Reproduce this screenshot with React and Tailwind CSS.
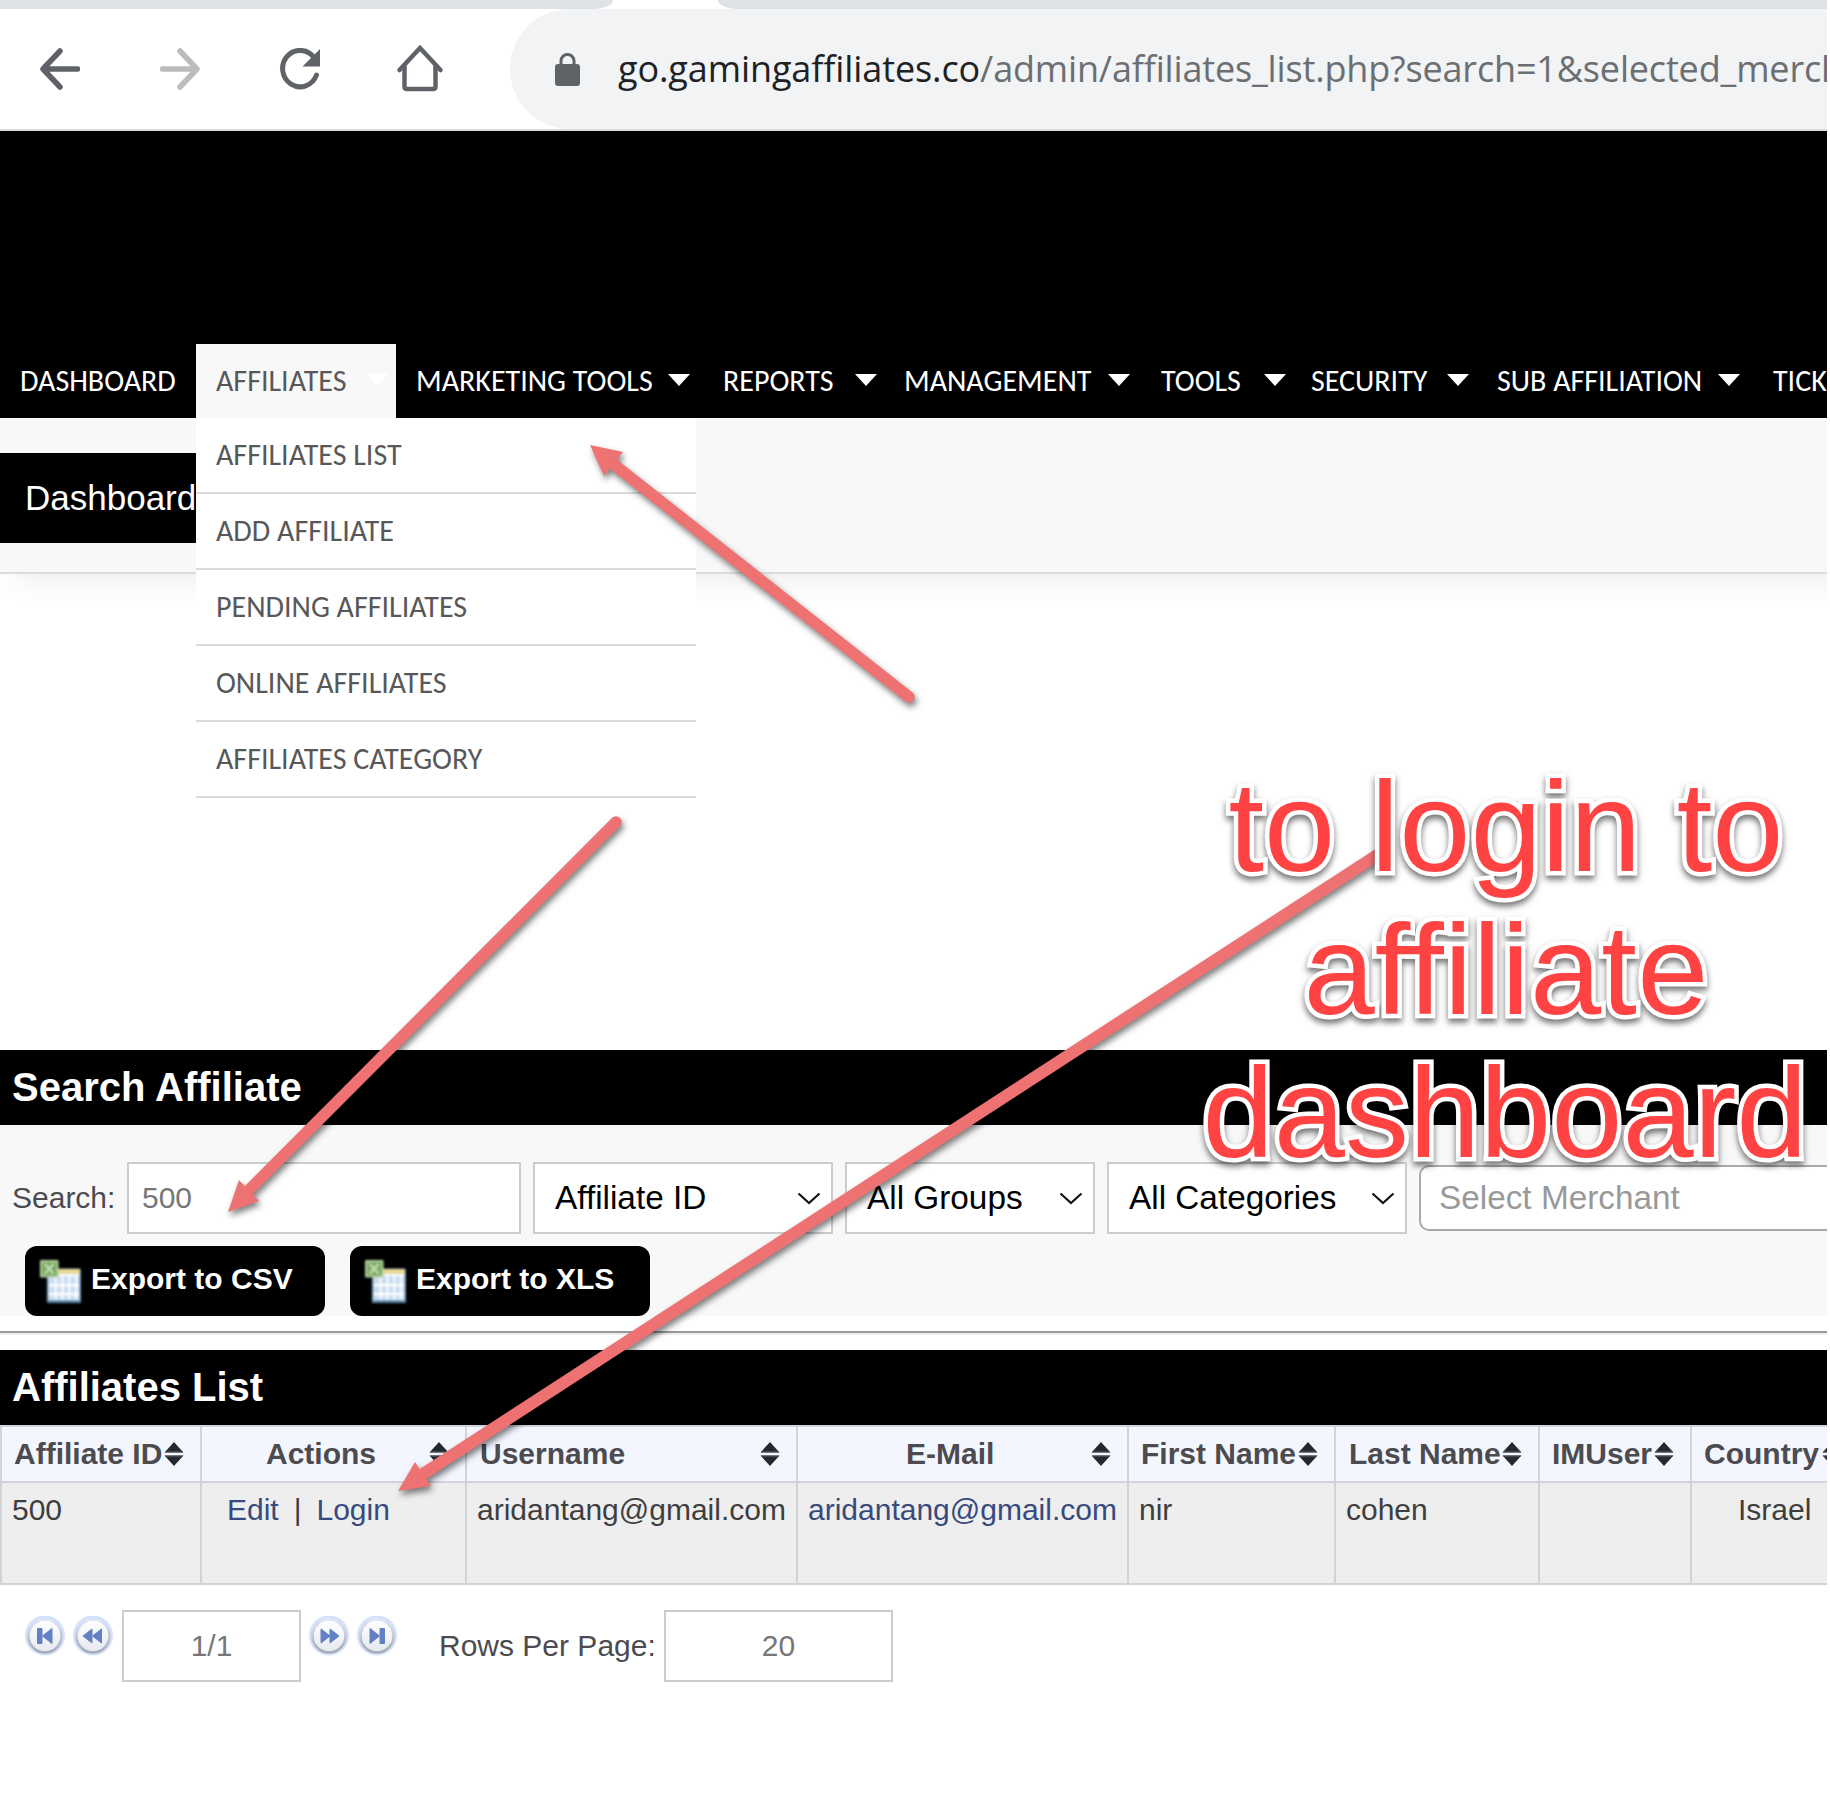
import React from "react";

const NAV = [
  { label: "DASHBOARD", width: 196, arrow: null },
  { label: "AFFILIATES", width: 200, arrow: 8, active: true },
  { label: "MARKETING TOOLS", width: 307, arrow: 13 },
  { label: "REPORTS", width: 181, arrow: 7 },
  { label: "MANAGEMENT", width: 257, arrow: 11 },
  { label: "TOOLS", width: 150, arrow: 5 },
  { label: "SECURITY", width: 186, arrow: 8 },
  { label: "SUB AFFILIATION", width: 276, arrow: 13 },
  { label: "TICKETS", width: 160, arrow: null },
];

const MENU = [
  "AFFILIATES LIST",
  "ADD AFFILIATE",
  "PENDING AFFILIATES",
  "ONLINE AFFILIATES",
  "AFFILIATES CATEGORY",
];

const COLUMNS = [
  { label: "Affiliate ID", pad: 12, cellPad: 10, cell: "500" },
  { label: "Actions", pad: 64, cellPad: 25, cell: "actions" },
  { label: "Username", pad: 13, cellPad: 10, cell: "aridantang@gmail.com" },
  { label: "E-Mail", pad: 108, cellPad: 10, cell: "aridantang@gmail.com", link: true },
  { label: "First Name", pad: 12, cellPad: 10, cell: "nir" },
  { label: "Last Name", pad: 13, cellPad: 10, cell: "cohen" },
  { label: "IMUser", pad: 12, cellPad: 10, cell: "" },
  { label: "Country", pad: 12, cellPad: 46, cell: "Israel" },
];

const GRID = "grid grid-cols-[200px_265px_331px_331px_207px_204px_152px_168px]";

function Toolbar() {
  return (
    <div className="w-full">
      <div className="flex h-[9px] justify-between bg-white">
        <div className="h-[9px] w-[613px] rounded-br-[18px_9px] bg-[#dee1e6]" />
        <div className="h-[9px] w-[1109px] rounded-bl-[18px_9px] bg-[#dee1e6]" />
      </div>
      <div className="flex h-[120px] items-center bg-white">
        <svg className="ml-[40px] h-[42px] w-[40px] shrink-0" viewBox="0 0 40 42" fill="none" stroke="#5f6368" strokeWidth="5.500" strokeLinecap="round" strokeLinejoin="round">
          <path d="M37.500 21H3.500M20 3 3 21l17 18" />
        </svg>
        <svg className="ml-[80px] h-[42px] w-[40px] shrink-0" viewBox="0 0 40 42" fill="none" stroke="#babcbe" strokeWidth="5.500" strokeLinecap="round" strokeLinejoin="round">
          <path d="M2.500 21h34M20 3l17 18-17 18" />
        </svg>
        <svg className="ml-[80px] h-[42px] w-[40px] shrink-0" viewBox="0 0 40 42" fill="none">
          <path d="M34 9.500A17.500 18.200 0 1 0 36.500 27" stroke="#5f6368" strokeWidth="5" strokeLinecap="round" />
          <path d="M40 1v17.500H22.500Z" fill="#5f6368" />
        </svg>
        <svg className="mb-[2px] ml-[76px] h-[48px] w-[48px] shrink-0" viewBox="0 0 48 48" fill="none" stroke="#5f6368" strokeWidth="4.500" strokeLinecap="round" strokeLinejoin="miter">
          <path d="M3.500 26 24 4l20.500 22" />
          <path d="M8.500 22v20.500q0 2.500 2.500 2.500h26q2.500 0 2.500-2.500V22" />
        </svg>
        <div className="ml-[66px] flex h-[120px] w-[1400px] shrink-0 items-center rounded-l-[60px] bg-[#f1f3f4] pb-[1px]">
          <svg className="ml-[45px] mt-[2px] h-[33px] w-[25px] shrink-0" viewBox="0 0 25 33">
            <rect x="0" y="11" width="25" height="22" rx="3" fill="#5f6368" />
            <path d="M6 12V8a6.500 6.500 0 0 1 13 0v4" fill="none" stroke="#5f6368" strokeWidth="3" />
          </svg>
          <span className="ml-[38px] whitespace-nowrap font-['Open_Sans','Noto_Sans',sans-serif] text-[36px] leading-[50px] tracking-[-0.1px] text-[#202124]">
            go.gamingaffiliates.co
            <span className="tracking-[-0.16px] text-[#6b6e72]">/admin/affiliates_list.php?search=1&amp;selected_merch</span>
          </span>
        </div>
      </div>
      <div className="h-[2px] bg-[#dadbdc]" />
    </div>
  );
}

function Navigation() {
  return (
    <div className="flex h-[287px] items-end bg-black font-['Carlito','Lato',sans-serif] text-[30px] leading-[40px]">
      {NAV.map((n) => (
        <div
          key={n.label}
          className={
            "relative flex h-[74px] shrink-0 items-center whitespace-nowrap pl-[20px] " +
            (n.active ? "bg-[#f8f8f8] text-[#58585a]" : "text-white")
          }
          style={{ width: n.width, paddingRight: n.arrow ?? 0 }}
        >
          {n.label}
          {n.arrow !== null && (
            <svg className="mb-[3px] ml-auto h-[12px] w-[22px]" viewBox="0 0 22 12">
              <path d="M0 0h22L11 12Z" fill="#fff" />
            </svg>
          )}
          {n.active && (
            <div className="absolute left-0 top-[74px] z-10 w-[500px] bg-white">
              {MENU.map((m) => (
                <div key={m} className="flex h-[76px] items-center border-b-2 border-[#dadada] pl-[20px] text-[#58585a]">
                  {m}
                </div>
              ))}
            </div>
          )}
        </div>
      ))}
    </div>
  );
}

function SubHeader() {
  return (
    <div className="h-[156px] w-[1920px] border-b-2 border-[#dcdcdc] bg-[#f8f8f8] pt-[35px] shadow-[15px_6px_28px_rgba(0,0,0,0.08)]">
      <div className="flex h-[90px] w-[220px] items-center bg-black pl-[25px] text-[35px] text-white">Dashboard</div>
    </div>
  );
}

function Select({ label, box }) {
  return (
    <div className={"flex h-[72px] shrink-0 items-center justify-between border-2 border-[#ccc] bg-white pl-[20px] pr-[10px] text-[33.33px] text-black " + box}>
      <span className="whitespace-nowrap">{label}</span>
      <svg className="h-[13px] w-[24px]" viewBox="0 0 24 13" fill="none" stroke="#111" strokeWidth="2.200">
        <path d="m1.500 1.500 10.500 9.500 10.500-9.500" />
      </svg>
    </div>
  );
}

function SheetIcon() {
  return (
    <svg className="h-[43px] w-[41px] blur-[0.8px]" viewBox="0 0 42 44">
      <rect x="7" y="9" width="35" height="35" rx="1" fill="#5d87ab" />
      <rect x="8.500" y="9" width="32" height="32" fill="#eef5fc" />
      <rect x="8.500" y="9.500" width="32" height="4.500" fill="#ead58c" />
      <path d="M9 17h31v8H9zM9 27h31v7H9zM9 36h31v4H9z" fill="#b9d2ec" opacity=".75" />
      <path d="M16 15v26M23 15v26M30 15v26M37 15v26M9 25.500h31M9 34.500h31" stroke="#fff" strokeWidth="2" />
      <rect x="0" y="0" width="19" height="18" rx="1.500" fill="#b4d2a2" />
      <rect x="2" y="2" width="15" height="14" fill="#7aa85e" />
      <path d="m5 4 9 10M14 4 5 14" stroke="#c3dbb2" strokeWidth="2.500" />
    </svg>
  );
}

function ExportButton({ children }) {
  return (
    <div className="flex h-[70px] w-[300px] items-center rounded-[12px] bg-black pl-[15px] font-bold text-white">
      <SheetIcon />
      <span className="ml-[10px] whitespace-nowrap pb-[6px]">{children}</span>
    </div>
  );
}

function SearchPanel() {
  return (
    <div>
      <h2 className="flex h-[75px] items-center bg-black pb-[2px] pl-[12px] text-[40px] font-bold text-white">Search Affiliate</h2>
      <div className="h-[191px] overflow-hidden bg-[#f8f8f8] pt-[37px]">
        <div className="flex w-[2000px] items-center">
          <span className="w-[115px] shrink-0 pb-[2px] pl-[12px] text-[#4b4b50]">Search:</span>
          <div className="ml-[12px] flex h-[72px] w-[394px] shrink-0 items-center border-2 border-[#ccc] bg-white pb-[2px] pl-[13px] text-[#777]">500</div>
          <Select label="Affiliate ID" box="ml-[12px] w-[300px]" />
          <Select label="All Groups" box="ml-[12px] w-[250px]" />
          <Select label="All Categories" box="ml-[12px] w-[300px]" />
          <div className="ml-[12px] flex h-[66px] w-[500px] shrink-0 items-center rounded-[10px] border-2 border-[#aaa] bg-white pl-[18px] text-[33.33px] text-[#999]">
            Select Merchant
          </div>
        </div>
        <div className="mt-[12px] flex gap-[25px] pl-[25px]">
          <ExportButton>Export to CSV</ExportButton>
          <ExportButton>Export to XLS</ExportButton>
        </div>
      </div>
    </div>
  );
}

function SortIcon() {
  return (
    <svg className="ml-auto h-[24px] w-[20px] shrink-0" viewBox="0 0 20 24">
      <path d="M10 0 19.500 10.500H.5ZM10 24 .5 13.500h19Z" fill="#23292c" />
      <path d="M1 10h18M1 14h18" stroke="#5d6367" strokeWidth="1" />
    </svg>
  );
}

function AffiliatesTable() {
  return (
    <div>
      <h2 className="flex h-[75px] items-center bg-black pb-[2px] pl-[12px] text-[40px] font-bold text-white">Affiliates List</h2>
      <div className={GRID + " h-[58px] w-[1858px] border-y-2 border-[#d0d4da] bg-[#f3f6ff] font-bold text-[#4b4b50]"}>
        {COLUMNS.map((c) => (
          <div key={c.label} className="flex items-center border-l-2 border-[#d0d4da] pr-[16px]" style={{ paddingLeft: c.pad }}>
            <span className="whitespace-nowrap pb-[2px]">{c.label}</span>
            <SortIcon />
          </div>
        ))}
      </div>
      <div className={GRID + " h-[102px] w-[1858px] border-b-2 border-[#d0d4da] bg-[#eee] leading-[30px] text-[#3e3e40]"}>
        {COLUMNS.map((c) => (
          <div key={c.label} className="whitespace-nowrap border-l-2 border-[#d0d4da] pt-[12px]" style={{ paddingLeft: c.cellPad }}>
            {c.cell === "actions" ? (
              <>
                <span className="text-[#364a7d]">Edit</span>
                <span className="mx-[15px]">|</span>
                <span className="text-[#364a7d]">Login</span>
              </>
            ) : (
              <span className={c.link ? "text-[#364a7d]" : ""}>{c.cell}</span>
            )}
          </div>
        ))}
      </div>
    </div>
  );
}

function PagerIcon({ d }) {
  return (
    <svg className="h-[40px] w-[40px] shrink-0 blur-[0.6px]" viewBox="0 0 40 40">
      <defs>
        <linearGradient id="pagerFace" x1="0" y1="0" x2="0" y2="1">
          <stop offset="0" stopColor="#ffffff" />
          <stop offset=".5" stopColor="#f3f4f8" />
          <stop offset="1" stopColor="#e4e7ef" />
        </linearGradient>
        <linearGradient id="pagerRing" x1="0" y1="0" x2="0" y2="1">
          <stop offset="0" stopColor="#dfe5f3" />
          <stop offset="1" stopColor="#a2a8b5" />
        </linearGradient>
      </defs>
      <circle cx="20" cy="19.500" r="20" fill="#d6e1fb" />
      <circle cx="20" cy="20" r="16.500" fill="url(#pagerFace)" stroke="url(#pagerRing)" strokeWidth="2.500" />
      <path d={d} fill="#6380c4" stroke="#6380c4" strokeWidth="1" strokeLinejoin="round" />
    </svg>
  );
}

function Pager() {
  return (
    <div className="flex items-start pt-[25px]">
      <div className="ml-[25px] mt-[6px] flex gap-[8px]">
        <PagerIcon d="M12.500 12.500h4.500v15h-4.500zM27 12.500v15L17.500 20Z" />
        <PagerIcon d="M19 13v14L10 20ZM28.500 13v14L19.500 20Z" />
      </div>
      <div className="ml-[9px] flex h-[72px] w-[179px] items-center justify-center border-2 border-[#ccc] pb-[2px] text-[#777]">1/1</div>
      <div className="ml-[8px] mt-[6px] flex gap-[8px]">
        <PagerIcon d="M12 13v14l9-7ZM21 13v14l9-7Z" />
        <PagerIcon d="M13 12.500v15L22.500 20ZM23 12.500h4.500v15H23z" />
      </div>
      <span className="ml-[42px] w-[225px] whitespace-nowrap leading-[71px] text-[#4b4b50]">Rows Per Page:</span>
      <div className="flex h-[72px] w-[229px] items-center justify-center border-2 border-[#ccc] pb-[2px] text-[#777]">20</div>
    </div>
  );
}

function Annotations() {
  return (
    <>
      <svg className="pointer-events-none absolute left-0 top-0 z-20 h-[1816px] w-[1830px] drop-shadow-[2px_4px_3px_rgba(0,0,0,0.5)]" viewBox="0 0 1830 1816" fill="#ee7272" stroke="#ee7272">
        <path d="M909 697 612 463" strokeWidth="11.500" strokeLinecap="round" />
        <path d="M590 445 623 452 604 476Z" stroke="none" />
        <path d="M616 822 249 1190" strokeWidth="11.500" strokeLinecap="round" />
        <path d="M228 1212 239 1180 259 1201Z" stroke="none" />
        <path d="M1385 850 423 1474" strokeWidth="12" />
        <path d="M398 1491 415 1462 431 1486Z" stroke="none" />
      </svg>
      <div className="pointer-events-none absolute left-[1156px] top-[755px] z-30 w-[700px] text-center text-[128px] leading-[143px] text-[#ff4343] [-webkit-text-stroke:9px_white] [font-variant-ligatures:none] [paint-order:stroke_fill] [stroke-linejoin:round] drop-shadow-[0px_4px_3px_rgba(0,0,0,0.55)]">
        <div>to login to</div>
        <div className="tracking-[0.2px]">affiliate</div>
        <div className="mr-[2px]">dashboard</div>
      </div>
    </>
  );
}

export default function App() {
  return (
    <div className="relative h-[1816px] w-[1827px] overflow-hidden bg-white font-['Liberation_Sans',Arial,sans-serif] text-[30px]">
      <Toolbar />
      <Navigation />
      <SubHeader />
      <div className="h-[476px]" />
      <SearchPanel />
      <div className="mb-[15px] mt-[15px] h-[4px] border-b-2 border-t-2 border-b-[#eee] border-t-[#999]" />
      <AffiliatesTable />
      <Pager />
      <Annotations />
    </div>
  );
}
